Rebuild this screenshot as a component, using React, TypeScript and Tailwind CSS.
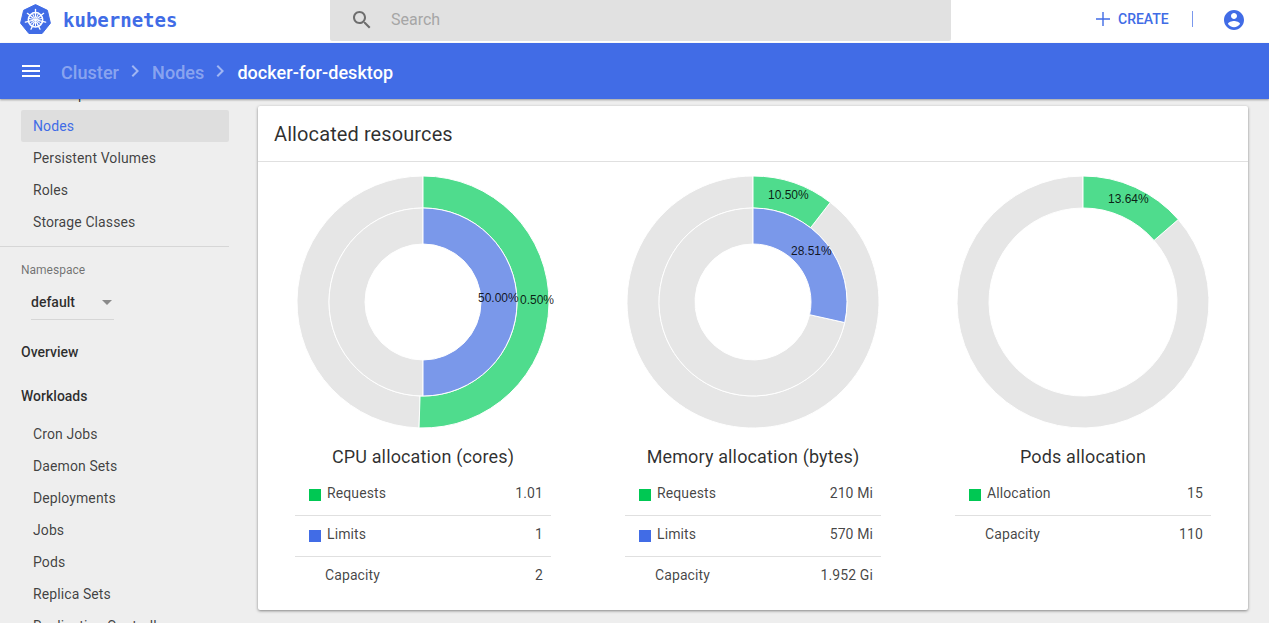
import React from "react";

const GREEN = "#4fdc8d";
const BLUE = "#7a98ea";
const GREY = "#e6e6e6";

function arc(cx: number, cy: number, ro: number, ri: number, from: number, to: number) {
  const pt = (r: number, f: number) => {
    const a = f * 2 * Math.PI;
    return `${(cx + r * Math.sin(a)).toFixed(3)} ${(cy - r * Math.cos(a)).toFixed(3)}`;
  };
  const large = to - from > 0.5 ? 1 : 0;
  return `M${pt(ro, from)}A${ro} ${ro} 0 ${large} 1 ${pt(ro, to)}L${pt(ri, to)}A${ri} ${ri} 0 ${large} 0 ${pt(ri, from)}Z`;
}

function Ring({ ro, ri, value, color }: { ro: number; ri: number; value: number; color: string }) {
  return (
    <g stroke="#fff" strokeWidth="1">
      <path d={arc(126, 126, ro, ri, value, 1)} fill={GREY} />
      <path d={arc(126, 126, ro, ri, 0, value)} fill={color} />
    </g>
  );
}

function Label({ x, y, children }: { x: number; y: number; children: string }) {
  return (
    <text x={x} y={y} fontSize="12" fill="#000" fillOpacity="0.87" style={{ fontFamily: '"Liberation Sans", Arial, sans-serif' }}>
      {children}
    </text>
  );
}

type Row = { swatch?: string; label: string; value: string };

function Allocation({ title, rows, children }: { title: string; rows: Row[]; children: React.ReactNode }) {
  return (
    <div className="flex flex-col items-center">
      <svg width="252" height="252" viewBox="0 0 252 252" className="block overflow-visible">
        {children}
      </svg>
      <div className="mt-[17px] text-[18px] leading-6 tracking-[0.14px] text-black/[.82]">{title}</div>
      <div className="mt-[6px] w-[256px]">
        {rows.map((r, i) => (
          <div
            key={r.label}
            className={`flex h-[41px] items-center pr-[8px] text-[14px] tracking-[0.1px] text-black/[.74] ${i < rows.length - 1 ? "border-b border-[#e0e0e0]" : ""}`}
          >
            {r.swatch ? (
              <>
                <span className="ml-[14px] mr-[6px] h-3 w-3" style={{ background: r.swatch }} />
                <span className="-mt-[4px]">{r.label}</span>
              </>
            ) : (
              <span className="ml-[30px] -mt-[4px]">{r.label}</span>
            )}
            <span className="ml-auto -mt-[4px]">{r.value}</span>
          </div>
        ))}
      </div>
    </div>
  );
}

function NavItem({ children, active }: { children: string; active?: boolean }) {
  return (
    <div
      className={`ml-[21px] flex h-8 w-[208px] items-center rounded-[2px] pl-3 text-[14px] tracking-[0.1px] ${active ? "bg-[#dedede] text-[#416ce6]" : "text-black/[.74]"}`}
    >
      {children}
    </div>
  );
}

function NavHead({ children, className }: { children: string; className: string }) {
  return <div className={`ml-[21px] text-[14px] font-medium leading-5 text-black/[.82] ${className}`}>{children}</div>;
}

function Logo() {
  const spokes = [0, 1, 2, 3, 4, 5, 6];
  return (
    <svg width="31" height="31" viewBox="0 0 31 31" className="shrink-0">
      <path d="M15.5 .6 27.4 6.3 30.4 19.2 22.1 29.5H8.9L.6 19.2 3.6 6.3Z" fill="#416ce6" stroke="#416ce6" strokeLinejoin="round" />
      <g stroke="#fff" fill="none" strokeLinecap="round">
        <circle cx="15.5" cy="15.8" r="7.2" strokeWidth="1.5" />
        {spokes.map((s) => (
          <path key={s} d="M15.5 5.4V13.2" strokeWidth="1.3" transform={`rotate(${(s * 360) / 7} 15.5 15.8)`} />
        ))}
        <circle cx="15.5" cy="15.8" r="1.6" fill="#fff" stroke="none" />
        {spokes.map((s) => (
          <path key={`o${s}`} d="M15.5 9.6V14" strokeWidth="1" transform={`rotate(${(s * 360) / 7 + 25.7} 15.5 15.8)`} />
        ))}
      </g>
    </svg>
  );
}

function Chevron() {
  return (
    <svg width="24" height="24" viewBox="0 0 24 24" fill="#fff" fillOpacity="0.5" className="ml-[4px] shrink-0">
      <path d="M10 6L8.59 7.41 13.17 12l-4.58 4.59L10 18l6-6z" />
    </svg>
  );
}

export default function App() {
  return (
    <div className="flex h-[623px] w-[1269px] flex-col overflow-hidden bg-[#eeeeee] font-['Roboto',sans-serif]">
      {/* top bar */}
      <header className="relative flex h-[43px] shrink-0 items-start bg-white">
        <div className="ml-[20px] mt-[4px]">
          <Logo />
        </div>
        <div className="ml-[12px] mt-[8px] w-[267px] font-['DejaVu_Sans_Mono',monospace] text-[19px] font-bold leading-6 text-[#416ce6]">
          kubernetes
        </div>
        <div className="flex h-[41px] w-[621px] items-center rounded-b-[2px] bg-[#e1e1e1] pl-[20px] text-[16px] text-[#a6a6a6]">
          <svg width="24" height="24" viewBox="0 0 24 24" fill="#6e6e6e" className="-mt-[2px] shrink-0">
            <path d="M15.5 14h-.79l-.28-.27C15.41 12.59 16 11.11 16 9.5 16 5.91 13.09 3 9.5 3S3 5.91 3 9.5 5.91 16 9.5 16c1.61 0 3.09-.59 4.23-1.57l.27.28v.79l5 4.99L20.49 19l-4.99-5zm-6 0C7.01 14 5 11.99 5 9.5S7.01 5 9.5 5 14 7.01 14 9.5 11.99 14 9.5 14z" />
          </svg>
          <span className="ml-[17px] -mt-[2px]">Search</span>
        </div>
        <div className="ml-[140px] mt-[6px] flex items-center">
          <svg width="24" height="24" viewBox="0 0 24 24" fill="#416ce6" className="shrink-0">
            <path d="M19 12.7h-6.3V19h-1.4v-6.3H5v-1.4h6.3V5h1.4v6.3H19z" />
          </svg>
          <span className="ml-[3px] text-[14px] font-medium text-[#416ce6]">CREATE</span>
          <span className="ml-[23px] h-[16px] w-px bg-[#416ce6]/70" />
          <svg width="24" height="24" viewBox="0 0 24 24" fill="#416ce6" className="ml-[29px] mt-[2px] shrink-0">
            <path d="M12 2C6.48 2 2 6.48 2 12s4.48 10 10 10 10-4.48 10-10S17.52 2 12 2zm0 3c1.66 0 3 1.34 3 3s-1.34 3-3 3-3-1.34-3-3 1.34-3 3-3zm0 14.2c-2.5 0-4.71-1.28-6-3.22.03-1.99 4-3.08 6-3.08 1.99 0 5.97 1.09 6 3.08-1.29 1.94-3.5 3.22-6 3.22z" />
          </svg>
        </div>
      </header>

      {/* breadcrumb bar */}
      <div className="relative z-10 flex h-[56px] shrink-0 items-center bg-[#416ce6] pl-[19px] text-[18px] font-medium tracking-[0.06px] shadow-[0_1px_2px_rgba(0,0,0,0.35)]">
        <svg width="24" height="24" viewBox="0 0 24 24" fill="#fff" className="shrink-0">
          <path d="M3 18h18v-2H3v2zm0-5h18v-2H3v2zm0-7v2h18V6H3z" />
        </svg>
        <span className="ml-[18px] pt-[2px] text-white/40">Cluster</span>
        <Chevron />
        <span className="ml-[5px] pt-[2px] text-white/40">Nodes</span>
        <Chevron />
        <span className="ml-[5px] pt-[2px] text-white">docker-for-desktop</span>
      </div>

      <div className="flex min-h-0 flex-1">
        {/* side nav */}
        <nav className="w-[258px] shrink-0 overflow-hidden">
          <div className="-mt-[21px]">
            <NavItem>Namespaces</NavItem>
            <NavItem active>Nodes</NavItem>
            <NavItem>Persistent Volumes</NavItem>
            <NavItem>Roles</NavItem>
            <NavItem>Storage Classes</NavItem>
          </div>
          <div className="mt-[8px] h-px w-[229px] bg-[#d6d6d6]" />
          <div className="ml-[21px] mt-[16px] text-[12px] leading-[14px] text-black/[.54]">Namespace</div>
          <div className="ml-[31px] mt-[9px] flex h-[34px] w-[83px] items-center border-b border-[#d6d6d6] text-[14px] font-medium text-black/[.82]">
            default
            <span className="ml-auto mr-[2px] h-0 w-0 border-x-[5px] border-t-[5px] border-x-transparent border-t-[#8a8a8a]" />
          </div>
          <NavHead className="mt-[22px]">Overview</NavHead>
          <NavHead className="mt-[24px] mb-[12px]">Workloads</NavHead>
          <NavItem>Cron Jobs</NavItem>
          <NavItem>Daemon Sets</NavItem>
          <NavItem>Deployments</NavItem>
          <NavItem>Jobs</NavItem>
          <NavItem>Pods</NavItem>
          <NavItem>Replica Sets</NavItem>
          <NavItem>Replication Controllers</NavItem>
        </nav>

        {/* card */}
        <main className="mt-[7px] h-[504px] w-[990px] shrink-0 rounded-[2px] bg-white shadow-[0_1px_3px_rgba(0,0,0,0.45)]">
          <div className="flex h-[56px] items-center border-b border-[#e0e0e0] pl-4 text-[20px] tracking-[0.1px] text-black/[.82]">
            Allocated resources
          </div>
          <div className="grid grid-cols-3 pt-[14px]">
            <Allocation
              title="CPU allocation (cores)"
              rows={[
                { swatch: "#00c853", label: "Requests", value: "1.01" },
                { swatch: "#416ce6", label: "Limits", value: "1" },
                { label: "Capacity", value: "2" },
              ]}
            >
              <Ring ro={126} ri={94} value={0.505} color={GREEN} />
              <Ring ro={94} ri={58} value={0.5} color={BLUE} />
              <Label x={223} y={128}>0.50%</Label>
              <Label x={181} y={126}>50.00%</Label>
            </Allocation>
            <Allocation
              title="Memory allocation (bytes)"
              rows={[
                { swatch: "#00c853", label: "Requests", value: "210 Mi" },
                { swatch: "#416ce6", label: "Limits", value: "570 Mi" },
                { label: "Capacity", value: "1.952 Gi" },
              ]}
            >
              <Ring ro={126} ri={94} value={0.105} color={GREEN} />
              <Ring ro={94} ri={58} value={0.2851} color={BLUE} />
              <Label x={141} y={23}>10.50%</Label>
              <Label x={164} y={79}>28.51%</Label>
            </Allocation>
            <Allocation
              title="Pods allocation"
              rows={[
                { swatch: "#00c853", label: "Allocation", value: "15" },
                { label: "Capacity", value: "110" },
              ]}
            >
              <Ring ro={126} ri={94} value={0.1364} color={GREEN} />
              <Label x={151} y={27}>13.64%</Label>
            </Allocation>
          </div>
        </main>
      </div>
    </div>
  );
}
